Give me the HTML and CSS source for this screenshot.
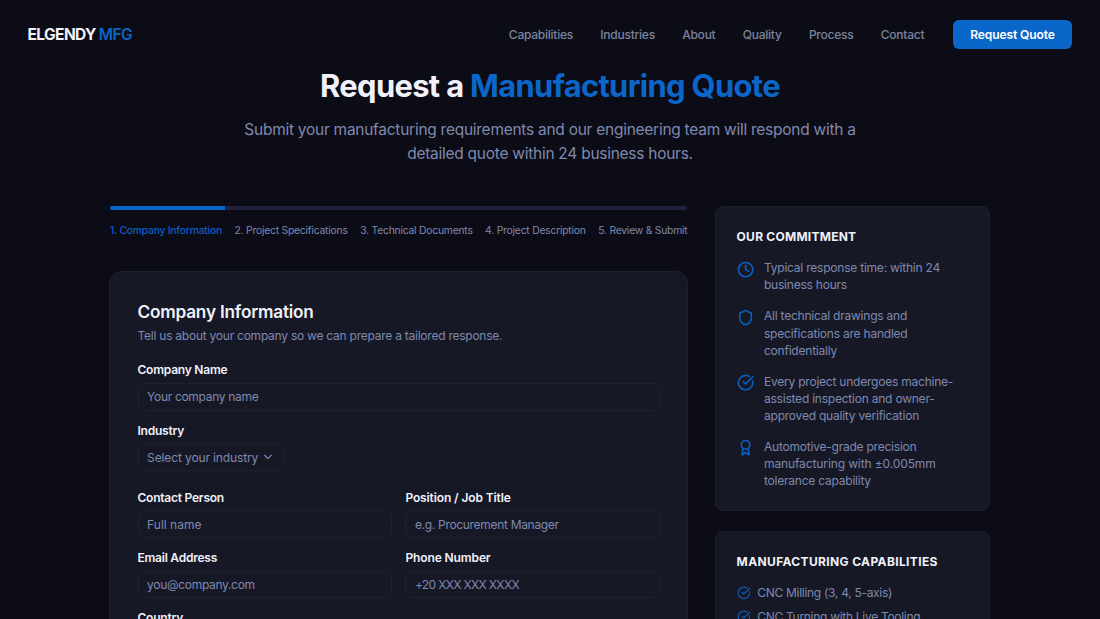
FILE: index.html
```html
<!DOCTYPE html>
<html lang="en">
<head>
<meta charset="utf-8">
<title>Request a Manufacturing Quote</title>
<link rel="stylesheet" href="styles.css">
</head>
<body>
<svg class="sprite" aria-hidden="true">
  <symbol id="check" viewBox="0 0 24 24"><path d="M21.801 10A10 10 0 1 1 17 3.335"/><path d="m9 11 3 3L22 4"/></symbol>
</svg>
<header class="header">
  <div class="logo">ELGENDY <span class="blue">MFG</span></div>
  <nav class="nav">
    <a>Capabilities</a><a>Industries</a><a>About</a><a>Quality</a><a>Process</a><a>Contact</a>
    <button class="cta">Request Quote</button>
  </nav>
</header>
<main class="main">
  <section class="hero">
    <h1>Request a <span class="blue">Manufacturing Quote</span></h1>
    <p>Submit your manufacturing requirements and our engineering team will respond with a<br>detailed quote within 24 business hours.</p>
  </section>
  <div class="columns">
    <div class="left">
      <div class="progress"><div class="progress-fill"></div></div>
      <div class="steps">
        <span class="active">1. Company Information</span><span>2. Project Specifications</span><span>3. Technical Documents</span><span>4. Project Description</span><span>5. Review &amp; Submit</span>
      </div>
      <form class="card">
        <h2>Company Information</h2>
        <p class="lead">Tell us about your company so we can prepare a tailored response.</p>
        <div class="stack">
          <div class="field"><label>Company Name</label><div class="input tight">Your company name</div></div>
          <div class="field"><label>Industry</label><div class="input select"><span>Select your industry</span><svg viewBox="0 0 24 24"><path d="m6 9 6 6 6-6"/></svg></div></div>
        </div>
        <div class="grid">
          <div class="field"><label>Contact Person</label><div class="input name">Full name</div></div>
          <div class="field"><label class="wide">Position / Job Title</label><div class="input tight">e.g. Procurement Manager</div></div>
          <div class="field"><label>Email Address</label><div class="input tight">you@company.com</div></div>
          <div class="field"><label class="wide">Phone Number</label><div class="input phone">+20 XXX XXX XXXX</div></div>
          <div class="field"><label>Country</label></div>
        </div>
      </form>
    </div>
    <aside class="side">
      <section class="panel">
        <h3>OUR COMMITMENT</h3>
        <ul class="promises">
          <li><svg viewBox="0 0 24 24"><circle cx="12" cy="12" r="10"/><path d="M12 6v6l4 2"/></svg><span>Typical response time: within 24<br>business hours</span></li>
          <li><svg viewBox="0 0 24 24"><path d="M20 13c0 5-3.5 7.5-7.66 8.95a1 1 0 0 1-.67-.01C7.5 20.5 4 18 4 13V6a1 1 0 0 1 1-1c2 0 4.5-1.2 6.24-2.72a1.17 1.17 0 0 1 1.52 0C14.51 3.81 17 5 19 5a1 1 0 0 1 1 1z"/></svg><span>All technical drawings and<br>specifications are handled<br>confidentially</span></li>
          <li><svg><use href="#check"/></svg><span>Every project undergoes machine-<br>assisted inspection and owner-<br>approved quality verification</span></li>
          <li><svg viewBox="0 0 24 24"><path d="m15.477 12.89 1.515 8.526a.5.5 0 0 1-.81.47l-3.58-2.687a1 1 0 0 0-1.197 0l-3.586 2.686a.5.5 0 0 1-.81-.469l1.514-8.526"/><circle cx="12" cy="8" r="6"/></svg><span>Automotive-grade precision<br><span class="wide">manufacturing with ±0.005mm</span><br>tolerance capability</span></li>
        </ul>
      </section>
      <section class="panel">
        <h3 class="wide-title">MANUFACTURING CAPABILITIES</h3>
        <ul class="caps">
          <li><svg><use href="#check"/></svg><span>CNC Milling (3, 4, 5-axis)</span></li>
          <li><svg><use href="#check"/></svg><span>CNC Turning with Live Tooling</span></li>
        </ul>
      </section>
    </aside>
  </div>
</main>
</body>
</html>
```
FILE: styles.css
```css
* { box-sizing: border-box; margin: 0; padding: 0; }
body { height: 619px; overflow: hidden; background: #0c0c17; color: #f0f1fa; font: 12.03px/17.2px Inter, "Liberation Sans", sans-serif; white-space: nowrap; }
svg { fill: none; stroke: currentColor; stroke-width: 2.2; stroke-linecap: round; stroke-linejoin: round; flex: none; }
ul { list-style: none; }
.sprite { display: none; }
.blue { color: #0a66c9; }

.header { height: 68.75px; padding: 0 28px 0 27.5px; display: flex; align-items: center; justify-content: space-between; }
.logo { font-size: 15.5px; font-weight: 700; letter-spacing: -0.6px; }
.logo .blue { font-weight: 600; }
.nav { display: flex; align-items: center; gap: 27.3px; font-weight: 500; color: #7b849f; letter-spacing: -0.25px; }
.cta { width: 119px; height: 29.5px; margin-left: 1.4px; border: 0; border-radius: 6px; background: #0a66c9; color: #fff; font: 600 12.03px Inter, "Liberation Sans", sans-serif; letter-spacing: -0.1px; }

.hero { text-align: center; }
.hero h1 { font-size: 30.9px; line-height: 34.4px; font-weight: 700; letter-spacing: -0.66px; }
.hero p { margin-top: 14.85px; font-size: 15.47px; line-height: 24px; letter-spacing: -0.25px; color: #7f89ae; }

.columns { display: flex; gap: 27px; width: 881px; margin: 40px 0 0 109px; align-items: flex-start; }
.left { width: 579px; }
.progress { height: 4px; margin: 0 1px; border-radius: 2px; background: #1f233e; overflow: hidden; }
.progress-fill { width: 20%; height: 100%; background: #0a66c9; }
.steps { display: flex; justify-content: space-between; margin: 13px 0.5px 0 1px; font-size: 10.31px; line-height: 14px; letter-spacing: -0.2px; color: #7f89ae; }
.steps .active { color: #0a5fc0; font-weight: 500; }

.card { height: 420px; margin-top: 34px; padding: 30px 27.5px; border: 1px solid #1c1f30; border-radius: 12px; background: #161826; }
.card h2 { font-size: 17.2px; line-height: 20px; font-weight: 600; letter-spacing: -0.2px; }
.lead { margin-top: 5px; letter-spacing: -0.25px; color: #7f89ae; }
.stack { margin-top: 20.2px; display: flex; flex-direction: column; gap: 13.75px; }
.grid { margin-top: 20.6px; display: grid; grid-template-columns: 1fr 1fr; gap: 13.75px; }
.field { display: flex; flex-direction: column; gap: 6.9px; align-items: stretch; }
.field label { line-height: 12px; font-weight: 600; letter-spacing: -0.24px; }
.field .wide { letter-spacing: -0.12px; }
.input { height: 27.5px; padding: 0 8.6px; display: flex; align-items: center; border: 1px solid #1d2036; border-radius: 7px; letter-spacing: -0.13px; color: #7f89ae; }
.input.tight { letter-spacing: -0.32px; }
.input.name { letter-spacing: 0; }
.input.phone { letter-spacing: -0.66px; }
.select { width: 147px; justify-content: space-between; }
.select svg { width: 13.75px; height: 13.75px; }

.side { width: 275px; display: flex; flex-direction: column; gap: 20.6px; }
.panel { padding: 21px 20.6px 20.2px; border: 1px solid #1b1e31; border-radius: 8px; background: #161826; }
.panel h3 { font-size: 12.03px; font-weight: 650; letter-spacing: 0.24px; }
.panel .wide-title { letter-spacing: 0.36px; }
.promises { margin-top: 14px; display: flex; flex-direction: column; gap: 13.75px; color: #7f89ae; letter-spacing: -0.23px; }
.promises .wide { letter-spacing: -0.12px; }
.promises li { display: flex; gap: 10.3px; }
.promises svg { width: 17.2px; height: 17.2px; margin: 1.4px 0 0 -0.1px; color: #0a62c0; }
.caps { margin-top: 13.6px; display: flex; flex-direction: column; gap: 6.9px; color: #7f89ae; letter-spacing: -0.3px; }
.caps li { display: flex; align-items: center; gap: 6.9px; }
.caps svg { width: 13.75px; height: 13.75px; color: #0a5aac; }
```
